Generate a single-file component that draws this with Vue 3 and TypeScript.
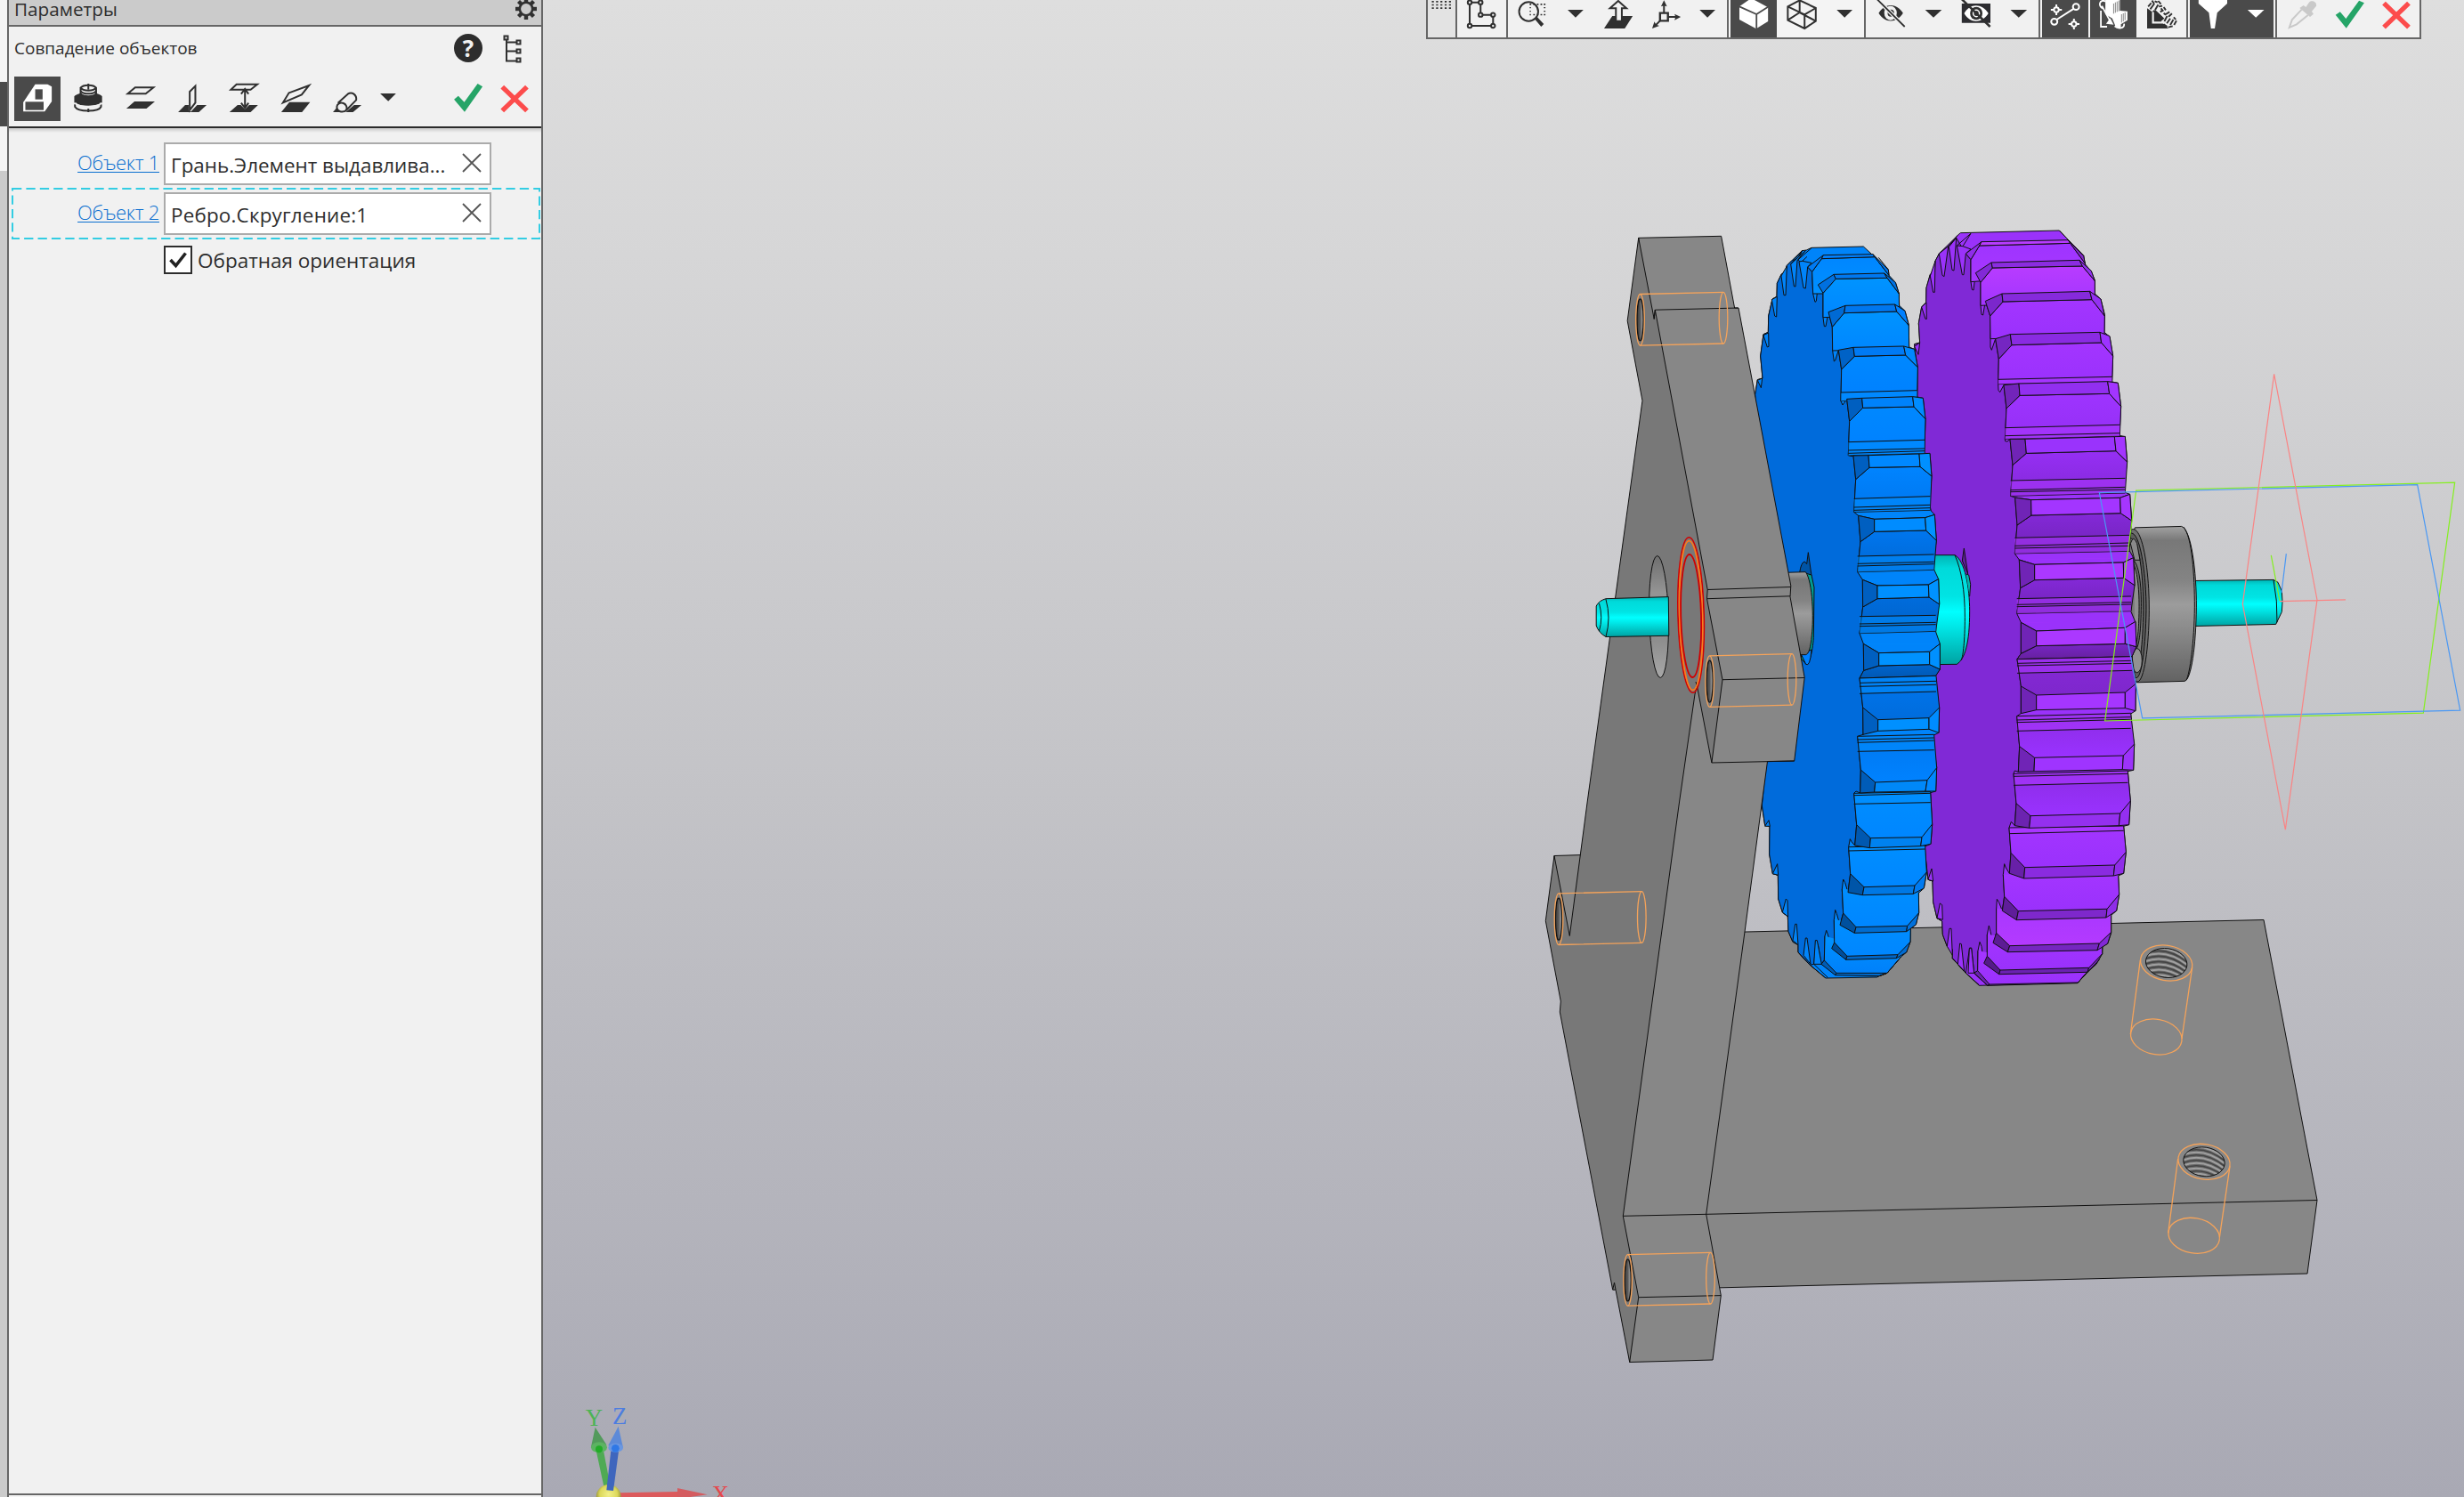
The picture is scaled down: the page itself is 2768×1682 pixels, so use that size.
<script setup lang="ts">
type Pt = [number, number]
interface Shape { d: string; f?: string; s?: string; w?: number }
interface Icon { x: number; w: number; k?: number; dark?: boolean; name: string; shapes: Shape[] }
interface Tooth {
  a: Pt; b: Pt; c: Pt; d: Pt; e: Pt; f: Pt; g: Pt; h: Pt
  v: Pt; w: Pt
  notch: Pt[]
  lines: [number, number][]
  land: string; side: string; strip: string; edge: string
}

const INK = '#303030'

/* ---------- parameter panel icons ---------- */
const PK = 2.529
const panelTools: Icon[] = [
  { name: 'coincidence', x: 16, w: 52, dark: true, shapes: [
    { d: 'M66 345L100 284H135L147 292V342L127 376H66Z', f: '#fff' },
    { d: 'M100 301H121V335H100Z', f: '#4a4a4a' },
    { d: 'M72 343H124V371H72Z', f: '#4a4a4a' } ] },
  { name: 'coaxial', x: 74, w: 52, shapes: [
    { d: 'M211 325C222 308 280 308 290 325V345C282 360 219 360 211 345Z', f: INK },
    { d: 'M213 352V360C222 378 280 378 287 360V352', s: INK, w: 2 },
    { d: 'M213 347C225 364 278 364 288 347', s: '#f1f1f1', w: 2 },
    { d: 'M229 296V315C235 328 267 328 273 315V296C266 284 236 284 229 296C236 308 266 308 273 296', f: '#f1f1f1', s: INK, w: 2 },
    { d: 'M229 307C238 319 264 319 273 307M251 282V302M251 366V378', s: INK, w: 2 } ] },
  { name: 'parallel', x: 132, w: 52, shapes: [
    { d: 'M384 295H436L414 316H363Z', s: INK, w: 2 },
    { d: 'M382 342H440L416 366H359Z', f: INK } ] },
  { name: 'perpendicular', x: 190, w: 52, shapes: [
    { d: 'M539 309L555 290V346L539 371Z', s: INK, w: 2 },
    { d: 'M526 354H536V372L544 378H506Z', f: INK },
    { d: 'M560 354H587L565 378H541Z', f: INK } ] },
  { name: 'distance', x: 248, w: 52, shapes: [
    { d: 'M672 284H731L712 302H656Z', s: INK, w: 2 },
    { d: 'M675 354H684L696 368L708 354H733L712 378H652Z', f: INK },
    { d: 'M696 302V362M685 317L696 300L706 317M685 347L696 364L706 347', s: INK, w: 2 } ] },
  { name: 'angle', x: 306, w: 52, shapes: [
    { d: 'M821 313L878 288L857 319L804 346Z', s: INK, w: 2 },
    { d: 'M822 344H881L858 378H799Z', f: INK } ] },
  { name: 'tangent', x: 364, w: 52, shapes: [
    { d: 'M1006 354H1027L1003 378H982Z', f: INK },
    { d: 'M946 378L956 364L984 378Z', f: INK },
    { d: 'M960 347L988 317C1000 307 1014 320 1012 337L984 371C973 382 957 376 957 360C957 352 966 343 976 348C984 352 988 364 983 372', f: '#f1f1f1', s: INK, w: 2 } ] },
  { name: 'more', x: 422, w: 28, shapes: [{ d: 'M1080 315H1125L1103 341Z', f: INK }] }
]
const confirmIcons: Icon[] = [
  { name: 'apply', x: 504, w: 44, shapes: [{ d: 'M1290 335L1302 323L1319 344L1357 282L1371 292L1320 377Z', f: '#25a467' }] },
  { name: 'cancel', x: 556, w: 44, shapes: [{ d: 'M1427 293L1497 373M1497 293L1427 373', s: '#fc4c4c', w: 5.4 }] }
]
const panelBox = (i: Icon) => `${i.x * PK} 258 ${i.w * PK} 150`

/* ---------- view toolbar icons ---------- */
const K2 = 2.7034
const K3 = 2.579
const caret = (x: number, w: number, k: number, cx: number, fill = INK): Icon =>
  ({ name: 'menu', x, w, k, shapes: [{ d: `M${cx - 24} 33H${cx + 24}L${cx} 59Z`, f: fill }] })
const dots: string = [0, 1, 2, 3, 4].flatMap(c => [3, 14, 25].map(y => `M${50 + c * 13} ${y}h6v5h-6z`)).join('')
const ring = (x: number, y: number) => `M${x - 6} ${y}a6 6.6 0 1 0 12 0a6 6.6 0 1 0 -12 0Z`
const groups: { name: string; icons: Icon[] }[] = [
  { name: 'grip', icons: [{ name: 'grip', x: 1604, w: 31, k: 2, shapes: [{ d: dots, f: INK }] }] },
  { name: 'sketch', icons: [{ name: 'sketch', x: 1637, w: 55, k: 2, shapes: [
    { d: 'M165 8H198V50H236V87H165Z', s: INK, w: 2 },
    { d: ring(165, 8) + ring(198, 8) + ring(198, 50) + ring(236, 50) + ring(236, 87) + ring(165, 87), f: '#f1f1f1', s: INK, w: 2 } ] }] },
  { name: 'view', icons: [
    { name: 'zoom', x: 1694, w: 56, k: 2, shapes: [
      { d: 'M315 39a29 32 0 1 0 58 0a29 32 0 1 0 -58 0', s: INK, w: 2 },
      { d: 'M362 64L369 56L390 81L382 90Z', f: INK },
      { d: 'M347 12h5v5h-5zM358 12h5v5h-5zM369 12h5v5h-5zM380 12h5v5h-5zM390 12h5v5h-5zM347 24h4v4h-4zM347 36h4v4h-4zM347 47h4v5h-4zM358 47h5v5h-5zM369 47h5v5h-5zM380 47h5v5h-5zM390 47h5v5h-5zM390 24h5v4h-5zM390 36h5v4h-5z', f: INK } ] },
    caret(1750, 40, 2, 486.5),
    { name: 'normal', x: 1790, w: 56, k: 2, shapes: [
      { d: 'M598 54H660L636 96H573Z', f: INK },
      { d: 'M609 71V28H591L616 3L641 28H627V71Z', f: '#f1f1f1', s: INK, w: 2 } ] },
    { name: 'orientation', x: 1846, w: 56, k: 2, shapes: [
      { d: 'M755 44V14M767 57H796M745 68L728 87', s: INK, w: 2 },
      { d: 'M743 44H767V70H743Z', s: INK, w: 2.4 },
      { d: 'M755 1L764 22L755 19L746 22ZM806 57L787 68L790 57L787 47ZM719 96L726 73L731 83L741 87Z', f: INK } ] },
    caret(1902, 38, 2, 887) ] },
  { name: 'shading', icons: [
    { name: 'shaded', x: 1944, w: 52, k: 2, dark: true, shapes: [
      { d: 'M984 22L1020 -6L1071 25V72L1035 97L984 66Z', f: '#fff' },
      { d: 'M984 22L1036 48L1071 23M1036 48V97', s: '#4a4a4a', w: 1.8 } ] },
    { name: 'wireframe', x: 1996, w: 56, k: 2, shapes: [
      { d: 'M1131 22L1167 1L1216 27V71L1182 96L1131 68ZM1131 22L1182 49L1216 27M1182 49V96M1167 1V42L1131 68M1167 42L1216 71', s: INK, w: 2 } ] },
    caret(2052, 42, 2, 1303.5) ] },
  { name: 'visibility', icons: [
    { name: 'hide', x: 2096, w: 58, k: 2, shapes: [
      { d: 'M1407 44C1425 9 1462 9 1481 44C1462 79 1425 79 1407 44Z', f: INK },
      { d: 'M1424 44a19 24 0 1 0 38 0a19 24 0 1 0 -38 0', f: '#f1f1f1' },
      { d: 'M1434 44a10 12 0 1 0 20 0a10 12 0 1 0 -20 0', f: INK },
      { d: 'M1400 -5L1486 90', s: '#f1f1f1', w: 4.5 },
      { d: 'M1400 -5L1486 90', s: INK, w: 1.8 } ] },
    caret(2154, 44, 3, 31),
    { name: 'hidden', x: 2198, w: 50, k: 3, shapes: [
      { d: 'M113 12H196V77H113Z', f: '#2c2c30' },
      { d: 'M120 45C136 10 172 10 190 45C172 80 136 80 120 45Z', f: '#fff' },
      { d: 'M137 45a18 22 0 1 0 36 0a18 22 0 1 0 -36 0', f: INK },
      { d: 'M146 45a9 11 0 1 0 18 0a9 11 0 1 0 -18 0', s: '#fff', w: 1.5 },
      { d: 'M112 -4L195 90', s: INK, w: 2.5 } ] },
    caret(2248, 42, 3, 278) ] },
  { name: 'filters', icons: [
    { name: 'points', x: 2294, w: 52, k: 3, dark: true, shapes: [
      { d: 'M388 66L438 29', s: '#fff', w: 2 },
      { d: 'M435 23a9 10 0 1 0 18 0a9 10 0 1 0 -18 0M372 73a9 10 0 1 0 18 0a9 10 0 1 0 -18 0M380 33a7 8 0 1 0 14 0a7 8 0 1 0 -14 0M431 81a7 8 0 1 0 14 0a7 8 0 1 0 -14 0M387 15V25M387 41V51M371 33H380M394 33H403M438 63V73M438 89V99M422 81H431M445 81H454', s: '#fff', w: 2 } ] },
    { name: 'solids', x: 2348, w: 52, k: 3, dark: true, shapes: [
      { d: 'M529 0H571V36L593 38V68L574 82V92C566 96 558 92 556 82L549 62L529 48Z', f: '#fff' },
      { d: 'M530 5C511 -6 508 22 521 28M516 36V90H534M519 20L545 76M556 88C566 99 586 96 583 80', s: '#fff', w: 1.8 },
      { d: 'M531 80L543 61L553 83Z', f: '#fff' },
      { d: 'M553 12V46M558 8V43M563 5V40M568 2V38M576 48V76M581 45V72M586 42V68', s: '#8a8a8a', w: 1 } ] },
    { name: 'section', x: 2400, w: 56, k: 3, shapes: [
      { d: 'M650 28L663 38L672 30L700 62L690 72L712 96H650Z', f: INK },
      { d: 'M652 14L666 0L736 68L716 92L696 76L706 66L674 34L663 39Z', f: '#f1f1f1' },
      { d: 'M667 40V76H702', s: '#f1f1f1', w: 2.2 },
      { d: 'M653 22L662 10M659 31L671 12M673 34L682 16M682 3L690 14M672 4L680 8M664 2L670 12M668 36L675 41M690 28L697 38M684 22L694 20M698 24L704 34M704 48L715 40M698 44L704 50M712 56L722 46M700 72L708 54M707 79L717 62M717 84L726 66M728 84L735 70M711 92L724 88M698 82L708 90M727 58L733 66M688 40L696 34', s: INK, w: 1.9 } ] } ] },
  { name: 'select', icons: [
    { name: 'filter', x: 2460, w: 52, k: 3, dark: true, shapes: [{ d: 'M799 0H882V12L853 43L846 96H835L829 43L799 12Z', f: '#fff' }] },
    { ...caret(2512, 42, 3, 965, '#fff'), dark: true } ] },
  { name: 'finish', icons: [
    { name: 'pipette', x: 2558, w: 60, k: 3, shapes: [
      { d: 'M1092 27L1103 18L1110 24L1119 8C1127 -1 1142 5 1140 20L1127 38L1132 47L1122 57Z', f: '#c9c9c9' },
      { d: 'M1098 32L1070 66L1062 93L1083 82L1116 51', s: '#c9c9c9', w: 2 } ] },
    { name: 'apply', x: 2618, w: 46, k: 3, shapes: [{ d: 'M1196 50L1209 40L1226 63L1264 2L1279 10L1227 95Z', f: '#25a467' }] },
    { name: 'cancel', x: 2664, w: 54, k: 3, shapes: [{ d: 'M1336 11L1408 92M1408 11L1336 92', s: '#fc4c4c', w: 5.4 }] } ] }
]
const barBox = (i: Icon) => {
  const k = i.k === 3 ? K3 : K2
  const origin = i.k === 3 ? 2160 : 1590
  return `${(i.x - origin) * k} 0 ${i.w * k} 126`
}

/* ---------- gears ---------- */
const tooth = (
  pts: number[], notch: number[], lines: [number, number][], land: string, side: string, strip: string, edge: string
): Tooth => {
  const p = (i: number): Pt => [pts[i * 2], pts[i * 2 + 1]]
  const n: Pt[] = []
  for (let i = 0; i < notch.length; i += 2) n.push([notch[i], notch[i + 1]])
  return { a: p(0), b: p(1), c: p(2), d: p(3), e: p(4), f: p(5), g: p(6), h: p(7), v: p(8), w: p(9), notch: n, lines, land, side, strip, edge }
}
const poly = (...p: Pt[]) => p.map(q => q.join(',')).join(' ')

/* upper teeth: chamfer above the land; lower teeth: chamfer below it */
const blueUp: Tooth[] = [
  tooth([332, 210, 347, 226, 385, 170, 379, 182, 552, 167, 558, 176, 604, 219, 606, 238, 350, 300, 606, 300], [357, 328, 361, 325], [], 'b1', '#007bf5', '#0080ff', '#0075ea'),
  tooth([367, 270, 384, 298, 420, 235, 427, 250, 590, 231, 600, 247, 628, 262, 640, 300, 384, 380, 641, 370], [388, 410, 393, 410], [], 'b2', '#0070e0', '#0078f0', '#0072e4'),
  tooth([402, 362, 415, 412, 459, 340, 455, 365, 626, 336, 632, 360, 660, 358, 673, 407, 416, 492, 674, 485], [421, 528, 425, 525], [], 'b2', '#006ad4', '#0076ee', '#0080ff'),
  tooth([436, 490, 446, 555, 486, 481, 490, 511, 656, 477, 662, 507, 692, 487, 703, 548, 444, 662, 701, 648], [450, 675, 455, 668], [[633, 626]], 'b3', '#0062c6', '#007af4', '#0088ff'),
  tooth([464, 655, 473, 730, 515, 652, 518, 685, 686, 647, 690, 681, 721, 652, 729, 722, 469, 845, 726, 838], [480, 848], [[800, 793], [828, 822], [838, 830]], 'b3', '#005fc0', '#0082fa', '#008cff'),
  tooth([486, 846, 494, 926, 537, 845, 540, 886, 708, 840, 711, 883, 744, 838, 750, 915, 488, 1036, 745, 1030], [488, 1036], [[991, 983], [1020, 1012], [1030, 1022]], 'b4', '#005fc0', '#0088ff', '#0090ff'),
  tooth([503, 1048, 510, 1136, 557, 1060, 557, 1102, 728, 1055, 731, 1098, 760, 1045, 766, 1132, 500, 1238, 758, 1231], [500, 1238], [[1185, 1179], [1210, 1204], [1218, 1211]], 'b5', '#005fc0', '#008cff', '#0092ff'),
  tooth([517, 1264, 518, 1356, 567, 1284, 567, 1328, 739, 1281, 741, 1323, 773, 1262, 776, 1347, 507, 1445, 764, 1438], [507, 1445], [[1388, 1384], [1413, 1408], [1421, 1415]], 'b6', '#005fc0', '#0090ff', '#0092ff'),
  tooth([520, 1480, 521, 1570, 572, 1511, 572, 1554, 743, 1507, 743, 1550, 778, 1480, 778, 1566, 507, 1596, 764, 1588], [507, 1596], [], 'b7', '#005fc0', '#0092ff', '#0090ff')
]
const blueLow: Tooth[] = [
  tooth([518, 1695, 519, 1786, 569, 1736, 569, 1774, 741, 1730, 741, 1768, 776, 1695, 774, 1780, 507, 1596, 765, 1588], [500, 1792], [[1612, 1606], [1624, 1618], [1648, 1641]], 'b8', '#005fc0', '#0090ff', '#008cff'),
  tooth([511, 1905, 509, 1983, 560, 1947, 557, 1980, 735, 1940, 729, 1977, 767, 1898, 764, 1977, 500, 1792, 758, 1786], [495, 1977], [[1803, 1797], [1813, 1806], [1843, 1838]], 'b9', '#005cb8', '#0088f8', '#0088ff'),
  tooth([497, 2090, 491, 2160, 544, 2135, 541, 2168, 717, 2132, 713, 2162, 752, 2088, 747, 2155, 488, 1984, 746, 1979], [480, 2147, 475, 2138], [[1991, 1984], [2020, 2015]], 'b10', '#0058b0', '#0082f0', '#0080fa'),
  tooth([476, 2255, 468, 2318, 522, 2300, 517, 2327, 693, 2295, 688, 2323, 733, 2250, 724, 2304, 470, 2165, 728, 2160], [458, 2285, 452, 2274], [[2178, 2172]], 'b10', '#0055a8', '#0078e4', '#007af0'),
  tooth([452, 2388, 441, 2428, 495, 2435, 490, 2455, 668, 2431, 665, 2450, 707, 2387, 697, 2427, 448, 2307, 706, 2318], [430, 2390, 425, 2377], [], 'b10', '#00509e', '#006cd0', '#0070dc'),
  tooth([422, 2487, 413, 2507, 465, 2533, 461, 2545, 636, 2528, 631, 2540, 678, 2485, 665, 2520, 421, 2410, 679, 2440], [400, 2460, 395, 2446], [], 'b10', '#004c98', '#0066c8', '#006cd4'),
  tooth([388, 2547, 378, 2560, 429, 2590, 425, 2597, 600, 2590, 573, 2600, 647, 2535, 600, 2590, 390, 2465, 647, 2535], [368, 2500, 361, 2478], [], 'b11', '#005cb4', '#006cd0', '#0078e8')
]
const purpleUp: Tooth[] = [
  tooth([865, 165, 882, 185, 918, 125, 911, 138, 1210, 119, 1217, 130, 1262, 172, 1267, 198, 882, 260, 1267, 230], [886, 286, 891, 288], [], 'p1', '#8f2cea', '#b83cff', '#8428cc'),
  tooth([898, 230, 915, 262, 951, 195, 955, 213, 1248, 187, 1258, 207, 1288, 223, 1300, 257, 915, 340, 1300, 320], [918, 370, 923, 372], [], 'p2', '#8229d6', '#8b2ce0', '#9230f0'),
  tooth([931, 325, 947, 375, 987, 300, 990, 327, 1283, 292, 1290, 320, 1320, 318, 1333, 375, 948, 452, 1332, 440], [948, 480, 952, 490], [], 'p3', '#7b27cc', '#862adc', '#9431f2'),
  tooth([965, 452, 976, 520, 1015, 437, 1020, 473, 1317, 430, 1322, 465, 1350, 443, 1361, 510, 974, 605, 1358, 597], [975, 625, 980, 632], [[589, 580]], 'p3', '#7526c2', '#8a2be2', '#9c33ff'),
  tooth([993, 608, 1002, 687, 1044, 603, 1047, 643, 1343, 596, 1349, 637, 1378, 601, 1388, 680, 997, 790, 1384, 780], [998, 797, 1005, 798], [[752, 742], [779, 770]], 'p4', '#7224ba', '#922ff0', '#a335ff'),
  tooth([1014, 790, 1023, 878, 1065, 790, 1069, 838, 1366, 782, 1371, 830, 1402, 781, 1409, 867, 1016, 982, 1402, 972], [1016, 982], [[930, 922], [962, 952], [968, 960]], 'p5', '#7024b6', '#9a33fc', '#a335ff'),
  tooth([1031, 987, 1038, 1080, 1085, 995, 1086, 1047, 1385, 988, 1387, 1040, 1418, 976, 1424, 1065, 1030, 1176, 1416, 1168], [1030, 1176], [[1123, 1114], [1150, 1140], [1158, 1150]], 'p6', '#7024b6', '#a335ff', '#a536ff'),
  tooth([1045, 1197, 1049, 1292, 1097, 1213, 1097, 1265, 1396, 1206, 1397, 1258, 1430, 1190, 1434, 1283, 1037, 1378, 1422, 1370], [1037, 1378], [[1328, 1320], [1348, 1340], [1355, 1347]], 'p6', '#7024b6', '#ab38ff', '#a838ff'),
  tooth([1051, 1408, 1051, 1513, 1103, 1437, 1103, 1487, 1402, 1426, 1402, 1480, 1437, 1405, 1440, 1490, 1038, 1532, 1425, 1523], [1038, 1532], [], 'p7', '#7024b6', '#ab38ff', '#a335ff')
]
const purpleLow: Tooth[] = [
  tooth([1051, 1623, 1051, 1715, 1103, 1653, 1103, 1703, 1402, 1644, 1402, 1697, 1438, 1615, 1437, 1706, 1038, 1532, 1425, 1523], [1037, 1724], [[1546, 1537], [1554, 1546], [1579, 1570]], 'p8', '#7024b6', '#a536ff', '#9c33fa'),
  tooth([1046, 1826, 1042, 1912, 1097, 1864, 1095, 1910, 1396, 1857, 1393, 1904, 1433, 1818, 1430, 1906, 1037, 1724, 1421, 1714], [1030, 1908], [[1737, 1727], [1745, 1735], [1774, 1765]], 'p9', '#7024b6', '#9f34ff', '#9c33fa'),
  tooth([1035, 2018, 1030, 2093, 1083, 2060, 1079, 2101, 1385, 2052, 1381, 2093, 1420, 2010, 1415, 2090, 1026, 1918, 1411, 1908], [1018, 2080], [[1927, 1918], [1957, 1948]], 'p9', '#6c23b0', '#9430ee', '#942ff0'),
  tooth([1017, 2185, 1012, 2254, 1064, 2234, 1061, 2271, 1367, 2226, 1363, 2262, 1405, 2182, 1397, 2254, 1011, 2100, 1397, 2094], [1000, 2235, 995, 2222], [[2120, 2110]], 'p3', '#6820a8', '#8a2be0', '#8f2de8'),
  tooth([995, 2332, 988, 2380, 1042, 2381, 1036, 2411, 1341, 2374, 1338, 2403, 1382, 2325, 1373, 2380, 991, 2258, 1379, 2262], [976, 2350, 970, 2341], [], 'p3', '#5f1d9a', '#7e28cc', '#8f2de8'),
  tooth([968, 2455, 957, 2488, 1013, 2498, 1006, 2519, 1315, 2490, 1308, 2513, 1355, 2452, 1343, 2491, 968, 2373, 1355, 2395], [948, 2450, 943, 2430], [], 'p10', '#5c1c94', '#7526c0', '#8229d6'),
  tooth([937, 2533, 926, 2557, 981, 2580, 977, 2594, 1280, 2572, 1275, 2587, 1325, 2525, 1305, 2560, 937, 2460, 1325, 2500], [918, 2500, 912, 2485], [], 'p3', '#541a88', '#6a22b0', '#7024b8'),
  tooth([905, 2582, 893, 2590, 945, 2628, 938, 2632, 1243, 2622, 1240, 2624, 1280, 2580, 1243, 2622, 906, 2515, 1280, 2580], [884, 2505, 878, 2505], [], 'p3', '#6a22b0', '#7526c0', '#7024b8')
]

const parse = (s: string): Pt[] => s.split(' ').map(p => p.split(',').map(Number) as Pt)
interface Gear { name: string; outline: string; front: string; face: string; base: string; up: Tooth[]; low: Tooth[]; gaps: string[]; extra: string }
const frontEdge = (start: string, up: Tooth[], low: Tooth[], end: string) =>
  poly(...parse(start), ...up.flatMap(t => [t.a, t.b, t.v, ...t.notch]), ...low.flatMap(t => [t.v, t.a, t.b, ...t.notch]), ...parse(end))

const gears: Gear[] = [
  {
    name: 'purple', face: '#8029d6', base: '#9a32fa', up: purpleUp, low: purpleLow,
    outline: '838,103 847,95 1180,87 1262,172 1267,200 1288,225 1300,255 1300,300 1320,318 1333,370 1332,430 1350,445 1361,510 1358,597 1378,601 1388,680 1383,778 1402,782 1409,865 1400,935 1402,970 1418,976 1424,1065 1415,1115 1416,1165 1430,1190 1434,1282 1422,1325 1422,1372 1437,1408 1440,1490 1424,1525 1427,1565 1438,1615 1437,1706 1421,1716 1424,1765 1433,1820 1430,1906 1411,1910 1420,2010 1415,2090 1397,2095 1405,2182 1397,2254 1379,2262 1382,2325 1373,2380 1355,2395 1355,2455 1343,2491 1326,2500 1325,2525 1243,2622 910,2632 865,2590 820,2540 820,2510 802,2500 787,2460 785,2415 768,2405 755,2350 753,2280 738,2275 725,2160 700,560 692,470 710,465 706,400 716,345 731,330 732,280 745,235 760,228 762,190 775,165',
    front: frontEdge('806,140 833,112', purpleUp, purpleLow, '865,2590 820,2540 820,2510 802,2500 787,2460 785,2415 768,2405 755,2350 753,2280 738,2275 725,2160 700,560 692,470 710,465 706,400 716,345 731,330 732,280 745,235 760,228 762,190 775,165'),
    gaps: ['692,478 705,505 710,465', '716,345 729,385 733,385 732,330', '745,240 755,295 760,295 762,190', '775,165 786,238 792,242 806,140', '808,142 819,220 825,222 833,112', '835,138 853,236 858,236 865,165 882,150 855,140',
      '738,2275 750,2238 755,2280', '768,2405 778,2355 785,2360 787,2410', '802,2500 810,2440 816,2440 820,2530', '838,2560 845,2490 850,2492 860,2585', '873,2590 877,2507 884,2507 893,2590'],
    extra: 'M835,138 L882,97 M855,140 L882,97 M838,103 L806,140 M1180,87 L1262,172 M820,2540 L865,2590 L910,2630 M893,2590 L938,2632 M1243,2622 L1315,2545'
  },
  {
    name: 'blue', face: '#006bdb', base: '#0084fa', up: blueUp, low: blueLow,
    outline: '313,155 328,153 345,145 520,141 604,219 606,238 628,262 640,300 641,340 660,358 673,405 674,480 692,487 703,548 701,648 721,652 729,725 725,838 744,839 750,915 743,1010 748,1032 760,1045 766,1133 757,1185 758,1230 773,1262 776,1345 763,1385 764,1440 778,1480 778,1566 763,1588 765,1640 776,1695 774,1780 757,1788 758,1835 767,1895 764,1977 746,1982 752,2090 747,2155 727,2163 733,2250 724,2304 706,2320 707,2385 697,2427 679,2440 678,2485 665,2520 647,2535 600,2590 573,2600 566,2604 393,2607 340,2563 300,2520 300,2495 282,2485 267,2450 265,2400 247,2385 233,2340 232,2260 214,2255 203,2190 204,2095 188,2092 178,2025 200,1800 155,640 163,590 180,585 173,510 183,437 199,430 200,375 213,318 228,310 229,265 243,235 259,225 262,205 280,187',
    front: frontEdge('296,185 313,155 300,187', blueUp, blueLow, '353,2560 340,2563 300,2520 300,2495 282,2485 267,2450 265,2400 247,2385 233,2340 232,2260 214,2255 203,2190 204,2095 188,2092 178,2025 200,1800 155,640 163,590 180,585 173,510 183,437 199,430 200,375 213,318 228,310 229,265 243,235 259,225 262,205 280,187'),
    gaps: ['163,592 175,617 179,585', '183,440 196,480 201,478 200,432', '211,320 221,375 227,378 229,310', '243,240 252,305 258,305 262,207', '275,200 286,275 291,276 297,188 325,155', '303,192 318,280 325,282 332,210 345,196 314,190',
      '188,2095 201,2075 205,2095', '214,2255 230,2222 233,2260', '247,2385 259,2340 264,2345 266,2400', '282,2480 290,2425 295,2425 300,2495', '318,2530 325,2472 330,2472 342,2560', '353,2560 358,2480 364,2480 379,2560'],
    extra: 'M298,187 L345,146 M314,190 L330,175 M275,200 L313,155 M300,2520 L340,2563 L393,2607 M353,2560 L400,2605 M571,178 L604,219'
  }
]

const landGradients: [string, string, string][] = [
  ['b1', '#0086ff', '#0090ff'], ['b2', '#0094ff', '#0086ff'], ['b3', '#0088ff', '#0080ff'], ['b4', '#0084ff', '#0076ee'],
  ['b5', '#0076ee', '#0068d4'], ['b6', '#006cdc', '#0062c8'], ['b7', '#0064cc', '#0058b4'], ['b8', '#0076ee', '#006cdc'],
  ['b9', '#0078f0', '#0082ff'], ['b10', '#008eff', '#0086ff'], ['b11', '#0092ff', '#0080fa'],
  ['p1', '#9e34ff', '#a837ff'], ['p2', '#b83cff', '#a235ff'], ['p3', '#a335ff', '#9a31fc'], ['p4', '#9e34ff', '#942ff4'],
  ['p5', '#962ff4', '#8429da'], ['p6', '#8429d8', '#7023b8'], ['p7', '#7826c6', '#66209f'], ['p8', '#8629d8', '#7e27cc'],
  ['p9', '#8b2ce4', '#9a32ff'], ['p10', '#a837ff', '#b43aff']
]
const grooveFill = (g: string) => (g === 'blue' ? '#0090ff' : '#b038ff')
const grooves = (t: Tooth) => t.lines.map(([l, r]) => `M${t.v[0]},${l} L${t.w[0]},${r}`).join(' ')
const bandUp = (t: Tooth): string => {
  if (!t.lines.length) return ''
  const [l, r] = t.lines[0]
  return poly([t.v[0], l], [t.w[0], r], t.w, t.v)
}
const bandLow = (t: Tooth): string => {
  if (!t.lines.length) return ''
  const [l, r] = t.lines[t.lines.length - 1]
  return poly(t.v, t.w, [t.w[0], r], [t.v[0], l])
}
/* lower teeth overlap downwards, so they are painted from the bottom up */
const stacked = (low: Tooth[]) => [...low].reverse()
const sideEdges = (t: Tooth) =>
  `M${t.v} L${t.a} M${t.w} L${t.g}` + (t.lines.length ? ` M${t.v} L${t.w}` : '')

/* ---------- threaded holes shown as cosmetic cylinders ---------- */
const bores = [
  { k: 'a', x1: 1842.5, y1: 359.3, x2: 1936, y2: 357.2, rx: 4.8, ry: 28.8 },
  { k: 'b', x1: 1920.6, y1: 765.6, x2: 2013, y2: 763.4, rx: 4.8, ry: 28.8 },
  { k: 'c', x1: 1751, y1: 1032.7, x2: 1844.3, y2: 1030.5, rx: 4.8, ry: 28.8 },
  { k: 'd', x1: 1828.6, y1: 1438.4, x2: 1921.5, y2: 1436.2, rx: 4.8, ry: 28.8 }
]
const threads = [{ k: 'e', x: 281, y: 246 }, { k: 'f', x: 408, y: 916 }]
</script>

<template>
  <div class="app">
    <aside class="rail"><i class="r1"></i><i class="r2"></i><i class="r3"></i></aside>

    <section class="panel">
      <header class="title">
        <span class="t-title">Параметры</span>
        <svg class="cog" width="26" height="26" viewBox="0 0 26 26">
          <circle cx="13" cy="13" r="7.2" fill="none" stroke="#303030" stroke-width="2.6" />
          <g fill="#303030">
            <rect v-for="n in 8" :key="n" x="10.8" y="1" width="4.4" height="4.6" :transform="`rotate(${n * 45} 13 13)`" />
          </g>
        </svg>
      </header>
      <div class="command">
        <span class="t-command">Совпадение объектов</span>
        <span class="help">?</span>
        <svg class="tree" width="24" height="34" viewBox="0 0 24 34" fill="none" stroke="#303030" stroke-width="2">
          <path d="M1.500 2.500h4v4h-4zM4 6.500V30.500H15.500M4 9.500H15.500M4 19.500H15.500M15.500 7.500h4v4h-4zM15.500 17.500h4v4h-4zM15.500 27.500h4v4h-4z" />
        </svg>
      </div>
      <div class="tools">
        <div class="modes">
          <span v-for="i in panelTools" :key="i.name" :class="['btn', { dark: i.dark }]">
            <svg :width="i.w" height="50" :viewBox="panelBox(i)" preserveAspectRatio="none">
              <path v-for="(s, n) in i.shapes" :key="n" :d="s.d" :fill="s.f || 'none'" :stroke="s.s || 'none'" :stroke-width="s.w" />
            </svg>
          </span>
        </div>
        <div class="confirm">
          <span v-for="i in confirmIcons" :key="i.name" class="btn">
            <svg :width="i.w" height="50" :viewBox="panelBox(i)" preserveAspectRatio="none">
              <path v-for="(s, n) in i.shapes" :key="n" :d="s.d" :fill="s.f || 'none'" :stroke="s.s || 'none'" :stroke-width="s.w" />
            </svg>
          </span>
        </div>
      </div>
      <div class="form">
        <div class="row first">
          <a class="label">Объект 1</a>
          <div class="field">
            <span class="v1">Грань.Элемент выдавлива...</span>
            <svg width="22" height="22" viewBox="0 0 22 22"><path d="M1 1L21 21M21 1L1 21" stroke="#555" stroke-width="1.8" /></svg>
          </div>
        </div>
        <div class="row second">
          <svg class="dash" width="594" height="58"><rect x="1" y="1" width="592" height="56" fill="none" stroke="#33cde3" stroke-width="2" stroke-dasharray="10.300 5.100" /></svg>
          <a class="label">Объект 2</a>
          <div class="field">
            <span class="v2">Ребро.Скругление:1</span>
            <svg width="22" height="22" viewBox="0 0 22 22"><path d="M1 1L21 21M21 1L1 21" stroke="#555" stroke-width="1.8" /></svg>
          </div>
        </div>
        <div class="check">
          <span class="box"><svg width="28" height="28" viewBox="0 0 28 28"><path d="M5.500 14L11.500 20.500L22.500 6.500" fill="none" stroke="#222" stroke-width="3.600" /></svg></span>
          <span class="t-check">Обратная ориентация</span>
        </div>
      </div>
      <footer class="foot"></footer>
    </section>

    <main class="view">
      <svg class="scene" width="2158" height="1682" viewBox="610 0 2158 1682">
        <defs>
          <linearGradient v-for="g in landGradients" :id="g[0]" :key="g[0]" x1="0" y1="0" x2="0" y2="1">
            <stop offset="0" :stop-color="g[1]" /><stop offset="1" :stop-color="g[2]" />
          </linearGradient>
          <linearGradient id="cyan" x1="0" y1="0" x2="0" y2="1">
            <stop offset="0" stop-color="#00b4b4" /><stop offset=".12" stop-color="#00dada" /><stop offset=".38" stop-color="#00e4e4" />
            <stop offset=".52" stop-color="#00ffff" /><stop offset=".66" stop-color="#00e6e6" /><stop offset="1" stop-color="#00a2a2" />
          </linearGradient>
          <linearGradient id="steel" x1="0" y1="0" x2="0" y2="1">
            <stop offset="0" stop-color="#a2a2a2" /><stop offset=".09" stop-color="#787878" /><stop offset=".35" stop-color="#848484" />
            <stop offset=".5" stop-color="#9c9c9c" /><stop offset=".7" stop-color="#868686" /><stop offset="1" stop-color="#626262" />
          </linearGradient>
          <linearGradient id="hole" x1="0" y1="0" x2="0" y2="1">
            <stop offset="0" stop-color="#6e6e6e" /><stop offset=".3" stop-color="#949494" /><stop offset=".7" stop-color="#8e8e8e" /><stop offset="1" stop-color="#a8a8a8" />
          </linearGradient>
          <linearGradient id="bore"><stop offset="0" stop-color="#3c3c3c" /><stop offset=".5" stop-color="#5a5a5a" /><stop offset="1" stop-color="#b4b4b4" /></linearGradient>
          <radialGradient id="ball" cx=".5" cy=".4"><stop offset="0" stop-color="#f2f08a" /><stop offset=".7" stop-color="#dcd85a" /><stop offset="1" stop-color="#a09c40" /></radialGradient>
          <clipPath id="threadclip"><ellipse cx="0" cy="0" rx="70" ry="49" transform="rotate(8)" /></clipPath>
        </defs>

        <!-- base plate -->
        <g class="edge">
          <polygon points="1940,1047.500 2543,1033.500 2603,1348.500 2592,1431 1925,1447 1900,1364" fill="#878787" />
          <path d="M1917,1364.300 L2603,1348.500" fill="none" />
        </g>

        <!-- tapped holes in the base -->
        <g transform="translate(2340 1000) scale(.33333)">
          <g v-for="t in threads" :key="t.k" :transform="`translate(${t.x} ${t.y})`">
            <g clip-path="url(#threadclip)">
              <rect x="-75" y="-55" width="150" height="110" fill="#6c6c6c" />
              <path v-for="n in 7" :key="n" :d="`M-75 ${-58 + n * 18} Q0 ${-88 + n * 18} 75 ${-26 + n * 18}`" fill="none" stroke="#a0a0a0" stroke-width="6" />
              <path v-for="n in 7" :key="'k' + n" :d="`M-75 ${-49 + n * 18} Q0 ${-79 + n * 18} 75 ${-17 + n * 18}`" fill="none" stroke="#444" stroke-width="5" />
            </g>
            <ellipse rx="70" ry="49" transform="rotate(8)" class="ol" />
            <g class="or">
              <ellipse rx="88" ry="59" transform="rotate(10)" />
              <ellipse cx="-34" cy="249" rx="87" ry="59" transform="rotate(10 -34 249)" />
              <path d="M-88 -10L-121 240M87 15L52 255" />
            </g>
          </g>
        </g>

        <!-- right shaft end and bearing -->
        <g transform="translate(2330 400) scale(.33333 .35714)" class="edge">
          <path d="M400,707 L672,704 L687,712 L700,740 Q704,775 700,805 L680,844 L400,850Z" fill="url(#cyan)" />
          <path d="M672,704 Q686,770 684,838" fill="none" />
          <path d="M205,540 L362,536 C395,545 413,680 412,790 C411,910 395,1020 372,1023 L212,1027 L195,1000 L180,600Z" fill="url(#steel)" />
          <path d="M369,538 C398,570 406,690 406,790 C405,900 390,1000 378,1020" fill="none" />
          <path d="M190,548 C230,520 254,680 253,800 C252,930 232,1050 205,1020Z" fill="#6f6f6f" />
          <path d="M185,560 C224,535 244,700 243,800 C241,920 226,1030 205,1010" fill="#5c5c5c" />
          <path d="M185,575 C218,560 234,690 233,800 C232,910 220,1000 205,995" fill="#7c7c7c" />
          <path d="M200,642 C222,660 228,740 226,800 C225,870 218,920 206,925" fill="#686868" />
          <path d="M200,655 C214,680 220,740 219,800 C218,860 214,900 206,910" fill="#909090" />
          <path d="M190,590 Q200,560 212,590 L222,642 L204,642Z" fill="#8a8a8a" />
          <ellipse cx="212" cy="958" rx="17" ry="38" fill="#929292" />
        </g>

        <template v-for="g in gears" :key="g.name">
          <g transform="translate(1920 230) scale(.33333)" class="edge">
            <polygon :points="g.outline" :fill="g.base" />
            <polygon :points="g.front" :fill="g.face" />
            <polygon v-for="(p, n) in g.gaps" :key="'g' + n" :points="p" :fill="g.base" />
            <g v-for="(t, n) in g.up" :key="'u' + n">
              <polygon :points="n < 5 ? poly(t.a, t.c, t.e, t.g, t.w, t.v, t.b) : poly(t.a, t.g, t.w, t.v, t.b)" :fill="grooveFill(g.name)" class="bare" />
              <path v-if="n > 5" :d="`M${t.a} L${t.c} L${t.e} L${t.g}`" :fill="g.base" />
              <polygon :points="poly(t.b, t.d, t.f, t.h, t.w, t.v)" :fill="`url(#${t.land})`" />
              <polygon :points="poly(t.a, t.c, t.d, t.b)" :fill="t.side" />
              <polygon :points="poly(t.c, t.e, t.f, t.d)" :fill="t.strip" />
              <polygon :points="poly(t.e, t.g, t.h, t.f)" :fill="t.edge" />
              <polygon v-if="bandUp(t)" :points="bandUp(t)" :fill="grooveFill(g.name)" fill-opacity=".5" class="bare" />
              <path :d="grooves(t)" fill="none" />
            </g>
            <g v-for="(t, n) in stacked(g.low)" :key="'l' + n">
              <polygon :points="poly(t.v, t.w, t.g, t.e, t.c, t.a)" :fill="`url(#${t.land})`" class="bare" />
              <polygon v-if="bandLow(t)" :points="bandLow(t)" :fill="grooveFill(g.name)" fill-opacity=".5" class="bare" />
              <polygon :points="poly(t.a, t.c, t.d, t.b)" :fill="t.side" />
              <polygon :points="poly(t.c, t.e, t.f, t.d)" :fill="t.strip" />
              <polygon :points="poly(t.e, t.g, t.h, t.f)" :fill="t.edge" />
              <path :d="sideEdges(t)" fill="none" />
              <path :d="grooves(t)" fill="none" />
            </g>
            <path :d="g.extra" fill="none" />
          </g>
          <!-- spacer between the gears -->
          <g v-if="g.name === 'purple'" transform="translate(1920 230) scale(.33333)" class="edge">
            <path d="M853,1200 L859,1158 L872,1245Z" fill="#5f1d9a" />
            <path d="M740,1181 L828,1181 C862,1200 878,1290 878,1370 C878,1480 862,1530 835,1549 L740,1550Z" fill="url(#cyan)" />
            <path d="M828,1181 C850,1230 862,1300 862,1390 C862,1470 856,1520 850,1535" fill="none" />
            <path d="M866,1245 L875,1248 L881,1280 L878,1320" fill="#00b8b0" />
          </g>
        </template>

        <!-- collar on the plate side of the blue gear -->
        <g transform="translate(1920 230) scale(.33333)" class="edge">
          <path d="M305,1240 Q310,1205 322,1203 L329,1211 L334,1172 L345,1250Z" fill="#0054a6" />
          <path d="M318,1240 L345,1248 L354,1290 L352,1460 C348,1510 338,1550 326,1548 L310,1530Z" fill="#009c90" />
          <path d="M310,1515 L345,1500 Q340,1560 326,1549Z" fill="#0080ff" />
          <path d="M255,1240 L325,1238 C350,1270 352,1400 346,1450 C342,1495 336,1515 325,1517 L270,1517Z" fill="url(#steel)" />
        </g>

        <!-- side plate -->
        <g class="edge">
          <polygon points="1746,961.500 1776,960.600 1770,1010 1766,1052 1750,1040" fill="#878787" />
          <path d="M1840.700,267.300 L1933.600,265.300 L1948.600,346 L1953,346 L2011.800,658 L2011,670.600 L2027.200,761.200 L2015.700,855 L1985.500,855.500 L1960,1047 L1916.700,1364.300 L1933.300,1455.600 L1924,1528 L1830.700,1530.500 L1822,1420 L1790,1000 L1840,600 L1850,420Z" fill="#878787" />
          <path d="M1840.700,267.300 L1858.200,358.400 L1859.300,348.200 L1918.200,662.500 L1917.500,672.700 L1935,763.700 L1922.900,857 L1906.400,770.600 L1904,780 L1886.700,900 L1823.300,1366.300 L1840.700,1457.700 L1830.700,1530.500 L1815,1449.200 L1811.700,1449.200 L1752.300,1137 L1753.300,1125 L1736.300,1034.700 L1746,961.500 L1763.300,1051.500 L1783.300,900 L1845,450.200 L1828.200,360.400Z" fill="#787878" />
          <path d="M1858.200,358.400 L1859.300,348.200 L1952.500,346 M1918.200,662.500 L2011.800,659.500 M1917.500,672.700 L2011,669.800 M1935,763.700 L2027,761.500 M1922.900,857 L2015.700,855 M1823.300,1366.300 L1917,1364.300 M1840.700,1457.700 L1933.300,1455.600 M1906.400,770.600 L1905,766 M1811.700,1449 L1813.500,1441 L1815,1449" fill="none" />
          <ellipse cx="1863.500" cy="693" rx="10.800" ry="68.500" transform="rotate(-1.500 1863.500 693)" fill="url(#hole)" />
          <path d="M1793.200,681 Q1796,675 1803.900,672.700 L1874.300,670.600 L1874.800,714.300 L1804,715.500 Q1796,711 1793.200,703 Z" fill="url(#cyan)" />
          <path d="M1803.900,673 Q1810,694 1804,715.500 M1796.500,678 Q1801,694 1796.500,709" fill="none" />
        </g>

        <!-- selected edge -->
        <g fill="none" transform="rotate(-1.500 1899.600 691)">
          <ellipse cx="1899.600" cy="691" rx="14.600" ry="87.300" stroke="#d00000" stroke-width="1.600" />
          <ellipse cx="1899.600" cy="691.500" rx="12.900" ry="84" stroke="#ff7a1a" stroke-width="1.800" />
          <ellipse cx="1899.600" cy="692" rx="11.400" ry="69" stroke="#d00000" stroke-width="1.800" />
        </g>

        <g v-for="b in bores" :key="b.k" class="or">
          <ellipse :cx="b.x1" :cy="b.y1" rx="3.600" ry="23.500" fill="url(#bore)" stroke="#111" />
          <ellipse :cx="b.x1" :cy="b.y1" :rx="b.rx" :ry="b.ry" />
          <ellipse :cx="b.x2" :cy="b.y2" :rx="b.rx" :ry="b.ry" />
          <path :d="`M${b.x1} ${b.y1 - b.ry}L${b.x2} ${b.y2 - b.ry}M${b.x1} ${b.y1 + b.ry}L${b.x2} ${b.y2 + b.ry}`" />
        </g>

        <!-- reference planes -->
        <g transform="translate(2330 400) scale(.33333 .35714)" class="plane">
          <path d="M209,423 L1283,398 L1177,1123 L104,1148Z M664,627 L693,770" stroke="#84f01e" />
          <path d="M85,430 L1157,405 L1301,1115 L230,1139Z M715,622 L699,745" stroke="#4a98f4" />
          <path d="M674,57 L819,767 L712,1490 L568,780Z M693,772 L915,767" stroke="#fa8484" />
        </g>

        <!-- orientation triad -->
        <g transform="translate(630 1560) scale(.33333)">
          <path d="M200,352L395,348V368L200,368Z" fill="#dc5a5c" /><path d="M393,336L494,358L393,372Z" fill="#d45c60" />
          <path d="M118,205L142,200L166,325L145,330Z" fill="#4faa54" /><path d="M116,131L102,197Q128,212 154,190Z" fill="#539a5c" />
          <ellipse cx="129" cy="199" rx="27" ry="18" fill="#5cb362" /><ellipse cx="129" cy="205" rx="12" ry="12" fill="#22ac28" />
          <circle cx="161" cy="366" r="42" fill="url(#ball)" />
          <path d="M170,200L196,204L177,345L154,343Z" fill="#3f66bd" /><path d="M194,128L160,192Q184,208 210,200Z" fill="#5d8ad8" />
          <ellipse cx="185" cy="200" rx="25" ry="15" fill="#6b97e0" /><ellipse cx="184" cy="202" rx="13" ry="13" fill="#2f78e6" />
          <text x="83" y="125" fill="#4db455">Y</text><text x="174" y="121" fill="#4c7de0">Z</text><text x="509" y="385" fill="#e6474c">X</text>
        </g>
      </svg>

      <nav class="toolbar">
        <div v-for="g in groups" :key="g.name" :class="['group', g.name]">
          <span v-for="i in g.icons" :key="i.x" :class="['btn', { dark: i.dark }]">
            <svg :width="i.w" height="42" :viewBox="barBox(i)" preserveAspectRatio="none">
              <path v-for="(s, n) in i.shapes" :key="n" :d="s.d" :fill="s.f || 'none'" :stroke="s.s || 'none'" :stroke-width="s.w" />
            </svg>
          </span>
        </div>
      </nav>
    </main>
  </div>
</template>

<style>
body { background: #c4c4c8; overflow: hidden; }
</style>

<style scoped>
* { box-sizing: border-box; }
.app { display: flex; width: 2768px; height: 1682px; overflow: hidden; font-family: "Open Sans", "Noto Sans", sans-serif; color: #2d2d2d; }
.rail { width: 8px; display: flex; flex-direction: column; background: #cbcbcb; }
.rail i { display: block; flex: none; }
.r1 { height: 92px; background: #f4f4f4; }
.r2 { height: 50px; background: #4a4a4a; }
.r3 { height: 50px; background: #f4f4f4; }
.panel { width: 602px; display: flex; flex-direction: column; background: #f1f1f1; border-left: 2px solid #666; border-right: 2px solid #666; }
.title { height: 30px; flex: none; display: flex; justify-content: space-between; padding: 0 4px 0 6px; background: #cbcbcb; border-bottom: 2px solid #666; }
.title span { font-size: 20.7px; line-height: 21px; white-space: nowrap; }
.cog { margin-top: -3px; flex: none; }
.command { height: 56px; flex: none; display: flex; align-items: flex-start; padding: 8px 0 0 6px; }
.t-command { font-size: 19px; line-height: 32px; width: 494px; white-space: nowrap; }
.help { width: 32px; height: 32px; border-radius: 50%; background: #2d2d2d; color: #f1f1f1; font-weight: 700; font-size: 26px; line-height: 32px; text-align: center; }
.tree { margin-left: 23px; }
.tools { height: 58px; flex: none; display: flex; justify-content: space-between; padding: 0 8px 0 6px; border-bottom: 2px solid #2b2b2b; }
.modes { display: flex; gap: 6px; }
.confirm { display: flex; gap: 8px; }
.btn { display: block; height: 50px; }
.btn svg { display: block; overflow: visible; }
.btn path { vector-effect: non-scaling-stroke; }
.dark { background: #4a4a4a; }
.form { flex: 1; background: linear-gradient(#c9c9c9, #f1f1f1 5px); }
.row { position: relative; display: flex; height: 48px; }
.first { margin-top: 16px; }
.second { margin-top: 8px; }
.dash { position: absolute; left: 3px; top: -5px; }
.label { width: 174px; padding-right: 5px; text-align: right; color: #0a6fd0; font-size: 22px; letter-spacing: -0.25px; line-height: 48px; font-weight: 300; text-decoration: underline; text-underline-offset: 2px; text-decoration-thickness: 1px; white-space: nowrap; margin-top: -2px; }
.field { width: 368px; height: 48px; display: flex; justify-content: space-between; border: 2px solid #ababab; background: #fff; padding: 0 9px 0 6px; font-size: 22.400px; line-height: 48px; white-space: nowrap; }
.v2 { letter-spacing: 0.2px; }
.field svg { margin-top: 10px; flex: none; }
.check { display: flex; margin: 12px 0 0 174px; gap: 6px; font-size: 22.500px; line-height: 34px; white-space: nowrap; }
.box { width: 32px; height: 32px; border: 2px solid #2d2d2d; background: #fff; }
.box svg { display: block; }
.foot { height: 4px; flex: none; border-top: 2px solid #666; background: #f4f4f4; }
.view { position: relative; width: 2158px; background: linear-gradient(#dedede, #d6d6d7 17%, #c3c3c7 53%, #a9a9b4); }
.scene { display: block; }
.edge polygon, .edge path, .edge ellipse, .ol { stroke: #101010; stroke-width: 1px; vector-effect: non-scaling-stroke; stroke-linejoin: round; }
.edge .bare { stroke: none; }
.ol { fill: none; }
.or { fill: none; stroke: #f5a35a; stroke-width: 1.300px; }
.or ellipse, .or path, .plane path { vector-effect: non-scaling-stroke; }
.plane { fill: none; stroke-width: 1.200px; }
.scene text { font-family: "Liberation Serif", serif; font-size: 80px; }
.toolbar { position: absolute; left: 992px; top: 0; height: 44px; display: flex; border: solid #666; border-width: 0 2px 2px; background: #f1f1f1; }
.toolbar .btn { height: 42px; }
.group { display: flex; border-right: 2px solid #666; }
.group:last-child { border-right: 0; }
.grip { background: #e3e3e3; }
.sketch { width: 57px; }
.view .group.view { width: 248px; background: none; }
.shading { padding-left: 2px; background: #f4f4f4; }
.filters { padding-left: 2px; }
.filters .btn:nth-child(2) { margin-left: 2px; }
.select { padding: 0 2px; }
</style>
